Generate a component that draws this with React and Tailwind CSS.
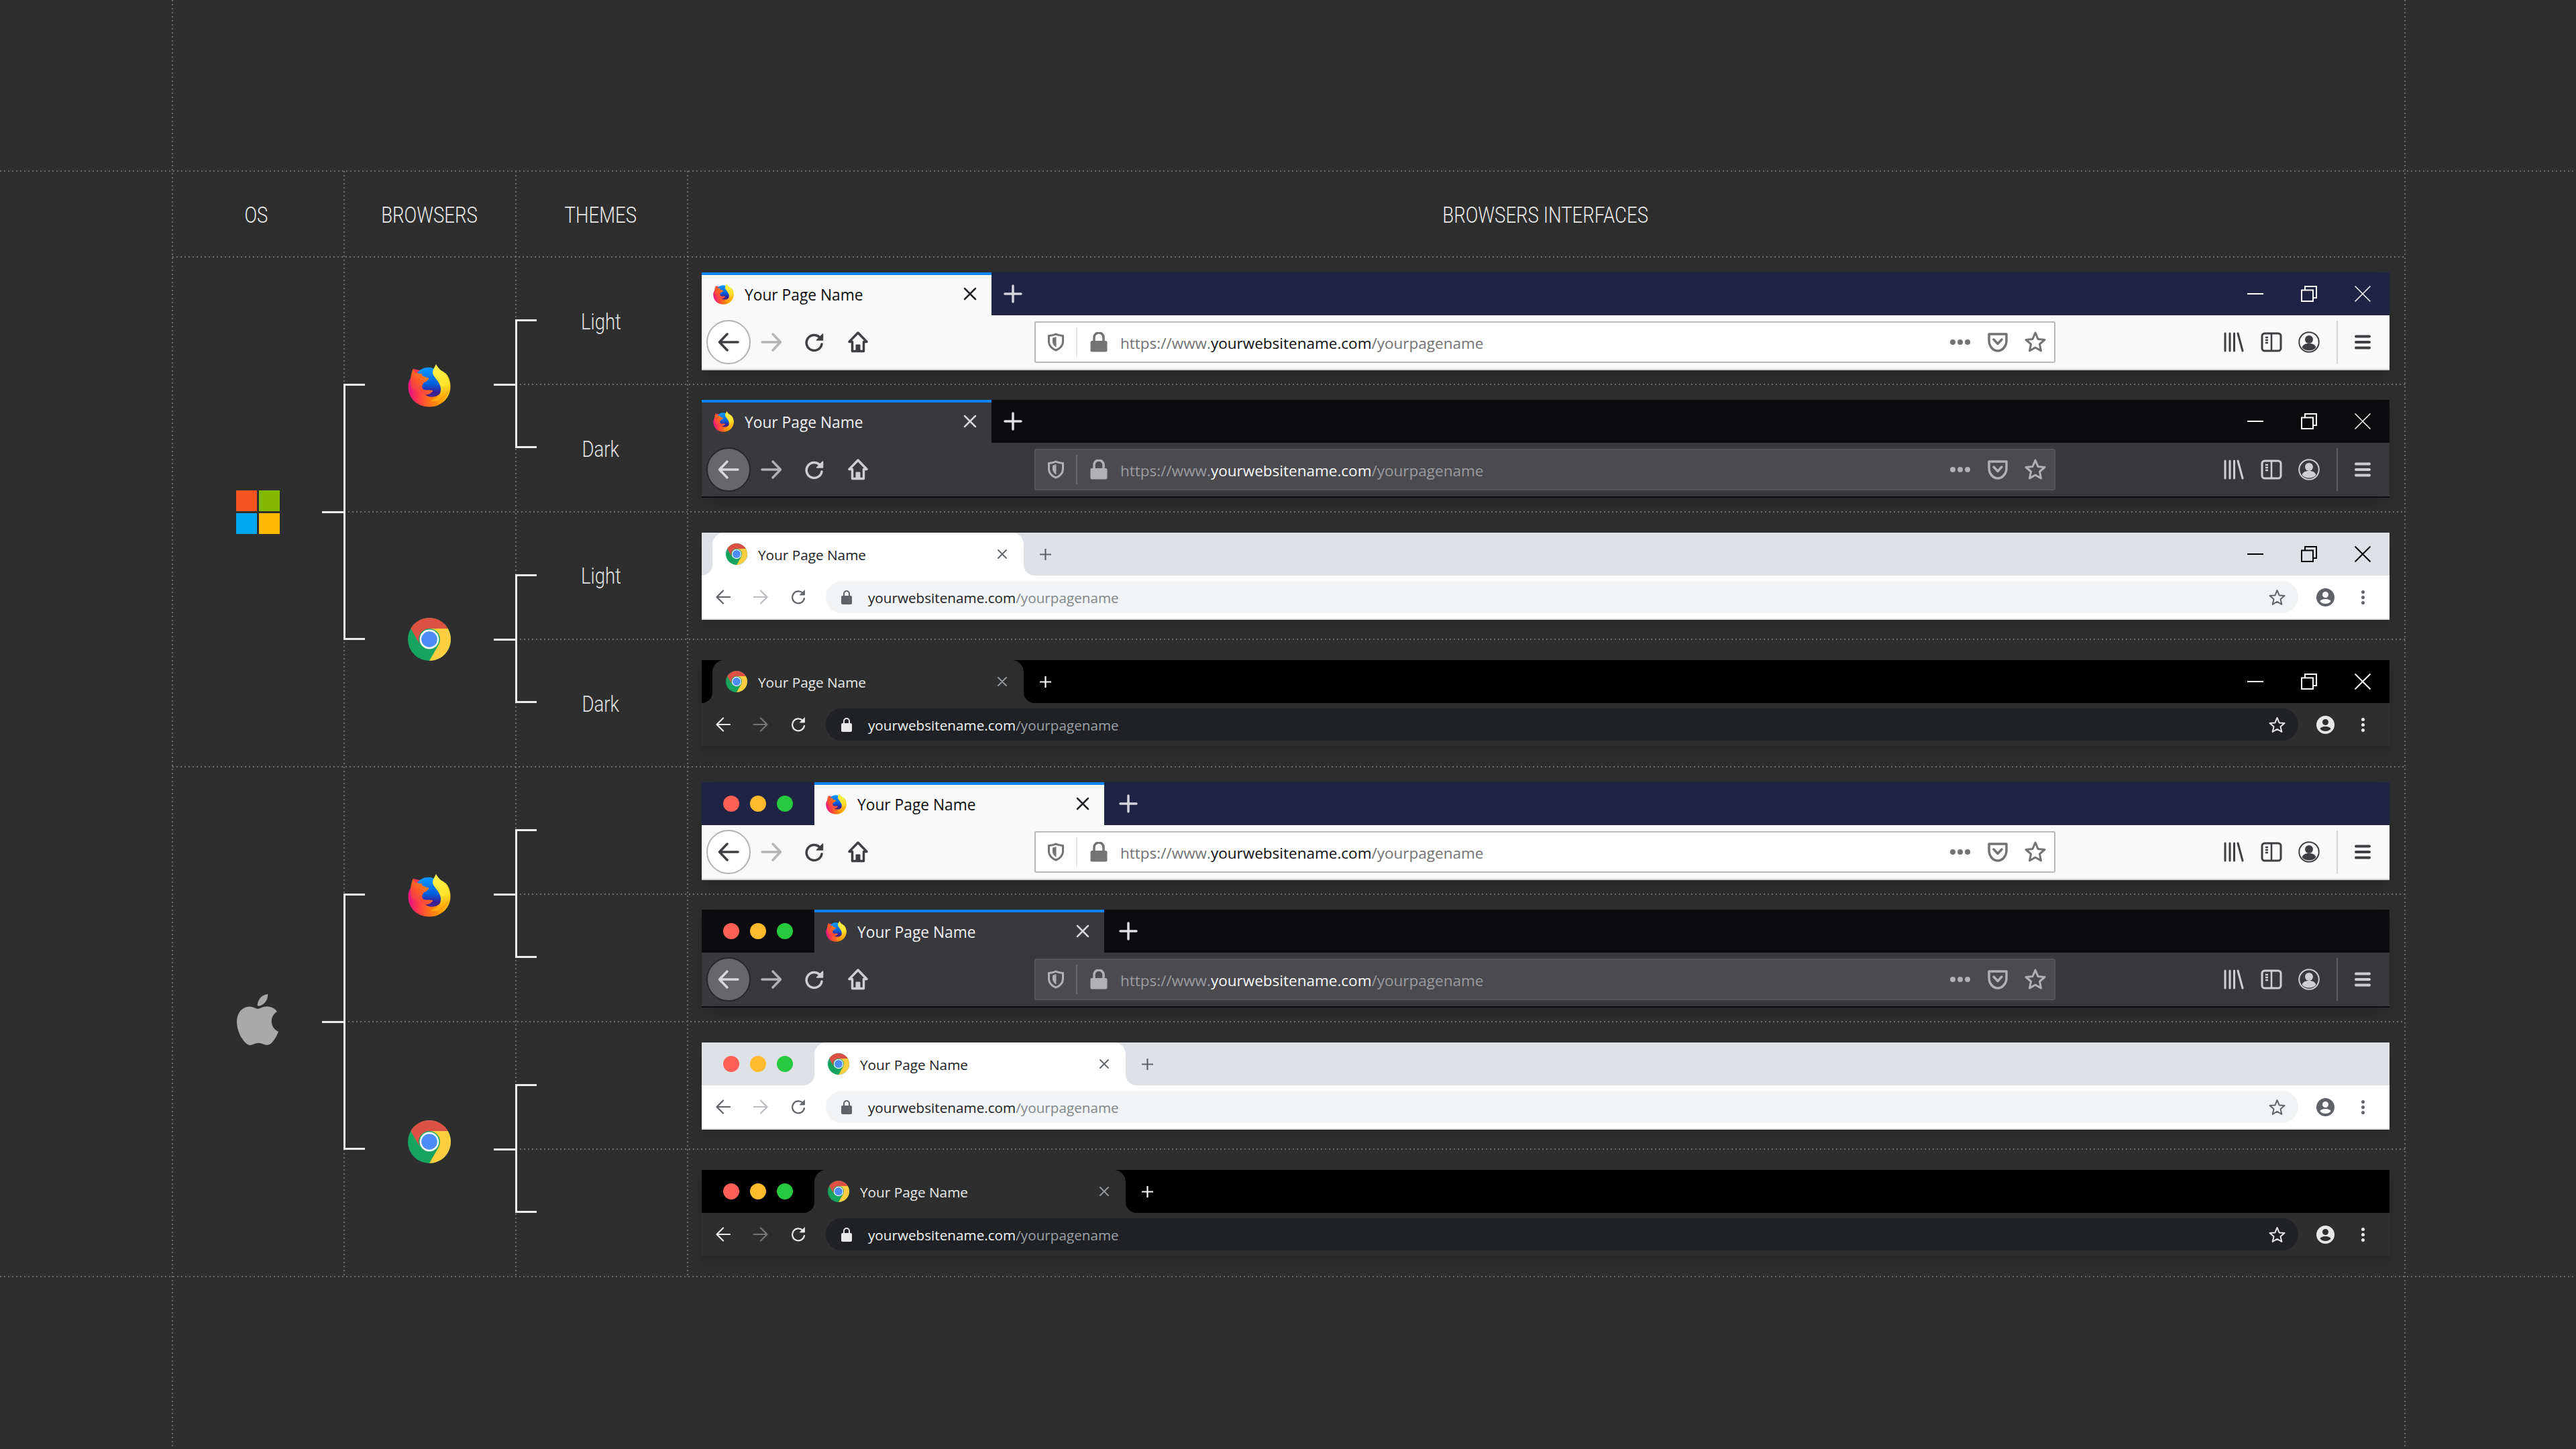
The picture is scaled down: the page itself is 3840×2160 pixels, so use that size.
import React from "react";
import { SiApple } from "react-icons/si";

const I = ({ w = 32, h = 32, vb = "0 0 32 32", className = "", children, sw = 3 }) => (
  <svg width={w} height={h} viewBox={vb} fill="none" stroke="currentColor" strokeWidth={sw} strokeLinecap="round" strokeLinejoin="round" className={"shrink-0 " + className}>
    {children}
  </svg>
);

const FirefoxLogo = ({ size = 64, idp = "a" }) => (
  <svg width={size} height={size} viewBox="0 0 64 64" className="shrink-0">
    <defs>
      <linearGradient id={idp + "body"} gradientUnits="userSpaceOnUse" x1="4" y1="46" x2="60" y2="44">
        <stop offset="0" stopColor="#e8197d" />
        <stop offset="0.2" stopColor="#ff3b47" />
        <stop offset="0.55" stopColor="#ff7a14" />
        <stop offset="0.85" stopColor="#ffa800" />
        <stop offset="1" stopColor="#ffc520" />
      </linearGradient>
      <linearGradient id={idp + "head"} gradientUnits="userSpaceOnUse" x1="4" y1="44" x2="36" y2="14">
        <stop offset="0" stopColor="#f2295f" />
        <stop offset="0.5" stopColor="#ff5a2a" />
        <stop offset="1" stopColor="#ff9a10" />
      </linearGradient>
      <linearGradient id={idp + "globe"} x1="0.5" y1="0" x2="0.5" y2="1">
        <stop offset="0" stopColor="#0a9bff" />
        <stop offset="0.55" stopColor="#0060df" />
        <stop offset="0.85" stopColor="#3a1d96" />
        <stop offset="1" stopColor="#45278d" />
      </linearGradient>
      <linearGradient id={idp + "tail"} x1="0.35" y1="0" x2="0.5" y2="1">
        <stop offset="0" stopColor="#fff44f" />
        <stop offset="0.6" stopColor="#ffe32a" />
        <stop offset="0.85" stopColor="#ffb00e" />
        <stop offset="1" stopColor="#ff980e" />
      </linearGradient>
    </defs>
    <path d="M7.7 6.8L10.5 13C4 19 .5 26 .5 33C.5 51 14 63.5 32 63.5C50 63.5 63.5 50 63.5 33C63.5 25 61 18 56 13L30 12Z" fill={`url(#${idp}body)`} />
    <path d="M13 14C18 7 26 4 34 5C46 7 55 20 54 33C52 44 42 50 33 48.5C25 47 19 40 18 32Z" fill={`url(#${idp}globe)`} />
    <path d="M7.7 6.8L11 12.5C15 13.5 18 14.5 21 14C20 16.5 24 19 31.5 20.5C31 23 28 26 24.5 27C21 30 20.5 34 22.5 37C27 40 32 37 37.5 39.5C33.500 44.5 29 46.5 24 45C18 44 10 40 6 36C2 25 5 13 7.7 6.8Z" fill={`url(#${idp}head)`} />
    <path d="M42 0C40 4 37 8 37 12C37 19 47 24 49 35C50 45 44 51 33 55C48 57 58 50 62 40C65 30 61 18 53 11C50 10 46 7 42 0Z" fill={`url(#${idp}tail)`} />
  </svg>
);

const ChromeLogo = ({ size = 64 }) => (
  <svg width={size} height={size} viewBox="0 0 100 100" className="shrink-0">
    <circle cx="50" cy="50" r="50" fill="#16a460" />
    <path d="M6.7 25A50 50 0 0 1 93.3 25H50A25 25 0 0 0 28.35 62.5Z" fill="#dd5044" />
    <path d="M93.3 25A50 50 0 0 1 50 100L71.65 62.500A25 25 0 0 0 50 25Z" fill="#ffcd40" />
    <circle cx="50" cy="50" r="22.500" fill="#fff" />
    <circle cx="50" cy="50" r="18.500" fill="#4d8bf5" />
  </svg>
);

const Lights = () => (
  <>
    <span className="w-6 h-6 rounded-full bg-[#ff5f57]" />
    <span className="w-6 h-6 rounded-full bg-[#ffbb2c]" />
    <span className="w-6 h-6 rounded-full bg-[#27c93f]" />
  </>
);

const WinButtons = ({ ff }) => (
  <div className="ml-auto flex items-center">
    <div className="w-20 flex justify-center">
      <I w={24} h={24} vb="0 0 24 24" sw={2}><path d="M0 12H24" strokeLinecap="butt" /></I>
    </div>
    <div className="w-20 flex justify-center">
      <I w={24} h={24} vb="0 0 24 24" sw={2}>
        <path d="M1 6.500H18V23H1Z" strokeLinecap="butt" strokeLinejoin="miter" />
        <path d="M6 6V1H23V18H18" strokeLinecap="butt" strokeLinejoin="miter" />
      </I>
    </div>
    <div className="w-20 flex justify-center">
      <I w={24} h={24} vb="0 0 24 24" sw={ff ? 1.5 : 2}><path d="M0.500 0.500L23.500 23.500M23.500 0.500L0.500 23.500" strokeLinecap="butt" /></I>
    </div>
  </div>
);

const uiFont = "font-['Open_Sans','Liberation_Sans',sans-serif] whitespace-nowrap leading-none";

const ff = {
  light: {
    strip: "bg-[#1f2344] text-white",
    tab: "bg-[#f9f9fa] text-[#0c0c0d]",
    tabX: "text-[#222226]",
    plus: "text-[#d4d5db]",
    bar: "bg-[#f9f9fa] border-[#d0d0d2] text-[#3f3f43]",
    back: "bg-white border-[#b1b1b3] text-[#3f3f43]",
    fwd: "text-[#b5b5b7]",
    url: "bg-white border-[#b8b8ba]",
    urlIcon: "text-[#737373]",
    sep: "border-[#e2e2e4]",
    sep2: "border-[#d5d5d7]",
    dim: "text-[#737373]",
    main: "text-[#0c0c0d]",
  },
  dark: {
    strip: "bg-[#0c0c0e] text-white",
    tab: "bg-[#38383d] text-[#f0f0f2]",
    tabX: "text-[#d7d7db]",
    plus: "text-[#e0e0e2]",
    bar: "bg-[#38383d] border-[#0c0c0d] text-[#cfcfd3]",
    back: "bg-[#67676a] border-[#27272a] text-[#d7d7db]",
    fwd: "text-[#b1b1b3]",
    url: "bg-[#4a4a4f] border-[#57575b]",
    urlIcon: "text-[#b1b1b3]",
    sep: "border-[#66666a]",
    sep2: "border-[#5f5f63]",
    dim: "text-[#9c9ca0]",
    main: "text-[#f9f9fa]",
  },
};

const FirefoxBar = ({ theme, mac }) => {
  const t = ff[theme];
  return (
    <div className="w-[2516px] flex flex-col shadow-[0_10px_20px_rgba(0,0,0,0.15)]">
      <div className={"h-16 flex items-stretch " + t.strip}>
        {mac && (
          <div className="w-[168px] flex items-center gap-4 pl-8"><Lights /></div>
        )}
        <div className={"w-[432px] flex items-center border-t-4 border-[#0a84ff] pb-1 " + t.tab}>
          <div className="w-[64px] flex justify-center"><FirefoxLogo size={31} idp={"t" + theme + (mac ? "m" : "w")} /></div>
          <span className={uiFont + " text-[22.75px] pt-[4px]"}>Your Page Name</span>
          <div className="ml-auto w-[64px] flex justify-center">
            <I w={20} h={20} vb="0 0 20 20" sw={2.5} className={t.tabX}><path d="M2 2L18 18M18 2L2 18" /></I>
          </div>
        </div>
        <div className={(mac ? "w-[72px]" : "w-[64px]") + " flex items-center justify-center"}>
          <I w={28} h={28} vb="0 0 28 28" sw={3.5} className={t.plus}><path d="M14 2V26M2 14H26" /></I>
        </div>
        {!mac && <WinButtons ff />}
      </div>
      <div className={"h-[82px] border-b-2 flex items-center " + t.bar}>
        <div className={"ml-[7px] w-[66px] h-[66px] rounded-full border-2 flex items-center justify-center " + t.back}>
          <I sw={3.5}><path d="M30 16H3M14 4L2.500 16L14 28" /></I>
        </div>
        <div className={"w-[62px] flex justify-center " + t.fwd}>
          <I sw={3.5}><path d="M2 16H29M18 4L29.500 16L18 28" /></I>
        </div>
        <div className="w-[66px] flex justify-center">
          <I sw={3.5}>
            <path d="M24 9A11.500 11.500 0 1 0 27 19" />
            <path d="M28.500 4V13H19.500Z" fill="currentColor" strokeWidth="1.500" />
          </I>
        </div>
        <div className="w-[64px] flex justify-center">
          <I sw={3.5}>
            <path d="M16 2L3 15.500H7.500V29.500H24.500V15.500H29Z" />
            <path d="M13 29V20H19V29Z" fill="currentColor" strokeWidth="1" />
          </I>
        </div>
        <div className={"ml-[231px] w-[1522px] h-[62px] border-2 rounded-[3px] flex items-center " + t.url}>
          <div className={"w-[62px] h-[44px] border-r-2 flex items-center justify-center " + t.sep + " " + t.urlIcon}>
            <I w={26} h={28} vb="0 0 26 28" sw={3}>
              <path d="M13 2C9 4 5 4 2.500 4.500V13C2.500 19 7 24 13 26C19 24 23.500 19 23.500 13V4.500C21 4 17 4 13 2Z" />
              <path d="M13 7V21C10 19 8.500 16 8.500 13V8.500Z" fill="currentColor" strokeWidth="1" />
            </I>
          </div>
          <div className={"w-[64px] flex justify-center " + t.urlIcon}>
            <svg width="26" height="30" viewBox="0 0 26 30" fill="currentColor"><path d="M3 13H23a2.500 2.500 0 0 1 2.500 2.500V27A2.500 2.500 0 0 1 23 29.500H3A2.500 2.500 0 0 1 .5 27V15.500A2.500 2.500 0 0 1 3 13Z" /><path d="M6 14V8a7 7 0 0 1 14 0V14" fill="none" stroke="currentColor" strokeWidth="3.500" /></svg>
          </div>
          <span className={uiFont + " text-[22.5px] pt-[4px]"}>
            <span className={t.dim}>https://www.</span>
            <span className={t.main}>yourwebsitename.com</span>
            <span className={t.dim}>/yourpagename</span>
          </span>
          <div className={"ml-auto flex items-center " + t.urlIcon}>
            <div className="w-14 flex justify-center gap-[3px]">
              <span className="w-2 h-2 rounded-full bg-current" />
              <span className="w-2 h-2 rounded-full bg-current" />
              <span className="w-2 h-2 rounded-full bg-current" />
            </div>
            <div className="w-14 flex justify-center">
              <I sw={3.5}>
                <path d="M3 4H29V14C29 22 23 29 16 29C9 29 3 22 3 14Z" />
                <path d="M10 12L16 18.500L22 12" />
              </I>
            </div>
            <div className="w-14 flex justify-center">
              <I sw={3}><path d="M16 2L20 11.500L30 12.500L22.500 19L24.500 29L16 24L7.500 29L9.500 19L2 12.500L12 11.500Z" /></I>
            </div>
          </div>
        </div>
        <div className="ml-auto flex items-center">
          <div className="w-14 flex justify-center">
            <I sw={3}><path d="M3 3V29M10 3V29M16.500 3V29M22 3L29 29" /></I>
          </div>
          <div className="w-14 flex justify-center">
            <I sw={3}>
              <rect x="2" y="3" width="28" height="26" rx="4" />
              <path d="M16 3V29M7 9H11M7 13H11M7 17H11" strokeWidth="2.500" strokeLinecap="butt" />
            </I>
          </div>
          <div className="w-14 flex justify-center">
            <svg width="32" height="32" viewBox="0 0 32 32">
              <circle cx="16" cy="16" r="14.750" fill="none" stroke="currentColor" strokeWidth="2" />
              <circle cx="16" cy="12" r="6" fill="currentColor" />
              <path d="M5.500 24C7 19.500 11 18 16 18C21 18 25 19.500 26.500 24C24 27 20 28.500 16 28.500C12 28.500 8 27 5.500 24Z" fill="currentColor" />
            </svg>
          </div>
          <div className={"ml-[13px] w-[79px] h-16 border-l-2 flex items-center justify-center pr-[4px] " + t.sep2}>
            <I w={24} h={24} vb="0 0 24 24" sw={4}><path d="M2 3.500H22M2 12H22M2 20.500H22" /></I>
          </div>
        </div>
      </div>
    </div>
  );
};

const ch = {
  light: {
    wrap: "bg-white",
    strip: "bg-[#dee1e6] text-black",
    tab: "bg-white text-[#202124]",
    close: "text-[#5f6368]",
    plus: "text-[#5f6368]",
    bar: "border-[#dcdee2] text-[#5f6368]",
    fwd: "text-[#b9bbbe]",
    pill: "bg-[#f1f3f4]",
    main: "text-[#202124]",
    dim: "text-[#80868b]",
  },
  dark: {
    wrap: "bg-[#2e2e2e]",
    strip: "bg-black text-white",
    tab: "bg-[#2e2e2e] text-[#e8eaed]",
    close: "text-[#9aa0a6]",
    plus: "text-white",
    bar: "border-[#262626] text-[#e8e8e8]",
    fwd: "text-[#757575]",
    pill: "bg-[#202124]",
    main: "text-[#f1f3f4]",
    dim: "text-[#9aa0a6]",
  },
};

const ChromeBar = ({ theme, mac }) => {
  const t = ch[theme];
  return (
    <div className={"w-[2516px] flex flex-col shadow-[0_10px_20px_rgba(0,0,0,0.15)] " + t.wrap}>
      <div className="h-16 flex items-stretch">
        {mac ? (
          <div className={"w-[168px] rounded-br-[16px] flex items-center gap-4 pl-8 " + t.strip}><Lights /></div>
        ) : (
          <div className={"w-4 rounded-br-[16px] " + t.strip} />
        )}
        <div className={t.strip + " w-[464px]"}>
          <div className={"h-full rounded-t-[18px] flex items-center " + t.tab}>
            <div className="w-[72px] flex justify-center"><ChromeLogo size={32} /></div>
            <span className={uiFont + " text-[20.75px] -ml-[4px] pt-[2px]"}>Your Page Name</span>
            <div className="ml-auto w-[64px] flex justify-center">
              <I w={14} h={14} vb="0 0 14 14" sw={1.800} className={t.close}><path d="M1 1L13 13M13 1L1 13" /></I>
            </div>
          </div>
        </div>
        <div className={"flex-1 rounded-bl-[16px] flex items-stretch " + t.strip}>
          <div className="w-[64px] flex items-center justify-center">
            <I w={19} h={19} vb="0 0 19 19" sw={2.200} className={t.plus}><path d="M9.500 1V18M1 9.500H18" strokeLinecap="butt" /></I>
          </div>
          {!mac && <WinButtons />}
        </div>
      </div>
      <div className={"h-[66px] border-b-2 flex items-center pl-1 " + t.bar}>
        <div className="w-14 flex justify-center">
          <I w={22} h={22} vb="0 0 22 22" sw={2.200}><path d="M21 11H2M11 1.500L1.500 11L11 20.500" /></I>
        </div>
        <div className={"w-14 flex justify-center " + t.fwd}>
          <I w={22} h={22} vb="0 0 22 22" sw={2.200}><path d="M1 11H20M11 1.500L20.500 11L11 20.500" /></I>
        </div>
        <div className="w-14 flex justify-center">
          <I w={22} h={22} vb="0 0 22 22" sw={2.200}>
            <path d="M17.500 5A9 9 0 1 0 20 13" />
            <path d="M20.500 1V8H13.500Z" fill="currentColor" strokeWidth="0.800" />
          </I>
        </div>
        <div className={"ml-[13px] w-[2195px] h-12 rounded-full flex items-center pl-[23px] " + t.pill}>
          <svg width="16" height="21" viewBox="0 0 16 21" fill="currentColor" className="shrink-0"><path d="M2 8H14a2 2 0 0 1 2 2V19a2 2 0 0 1-2 2H2a2 2 0 0 1-2-2V10a2 2 0 0 1 2-2Z" /><path d="M4 9V5a4 4 0 0 1 8 0V9" fill="none" stroke="currentColor" strokeWidth="2" /></svg>
          <span className={uiFont + " ml-[24px] text-[20.7px] pt-[3px]"}>
            <span className={t.main}>yourwebsitename.com</span>
            <span className={t.dim}>/yourpagename</span>
          </span>
          <div className="ml-auto pr-[19px]">
            <I w={25} h={25} vb="0 0 25 25" sw={2}><path d="M12.500 2L15.600 9.400L23.500 10L17.500 15.300L19.300 23L12.500 18.900L5.700 23L7.500 15.300L1.500 10L9.400 9.400Z" /></I>
          </div>
        </div>
        <div className="w-20 flex justify-center">
          <svg width="27" height="27" viewBox="0 0 27 27" fill="currentColor">
            <path fillRule="evenodd" d="M13.500 0a13.500 13.500 0 1 0 0 27a13.500 13.500 0 0 0 0-27ZM13.500 5a4.500 4.500 0 1 1 0 9a4.500 4.500 0 0 1 0-9ZM13.500 16C17.500 16 21 17.300 21.500 19.500C19.500 22 16.500 23 13.500 23C10.500 23 7.500 22 5.500 19.500C6 17.300 9.500 16 13.500 16Z" />
          </svg>
        </div>
        <div className="w-8 flex flex-col items-center gap-[3px]">
          <span className="w-[5px] h-[5px] rounded-full bg-current" />
          <span className="w-[5px] h-[5px] rounded-full bg-current" />
          <span className="w-[5px] h-[5px] rounded-full bg-current" />
        </div>
      </div>
    </div>
  );
};

const hLine = "self-start h-[2px] -mt-px bg-[repeating-linear-gradient(90deg,#6e6e6e_0_2px,transparent_2px_6px)]";
const vLine = "justify-self-start w-[2px] -ml-px bg-[repeating-linear-gradient(180deg,#6e6e6e_0_2px,transparent_2px_6px)]";
const head = "flex items-center justify-center pt-1 pr-[3px] font-['Roboto',sans-serif] font-light text-[33px] text-[#eaeaea] whitespace-nowrap";
const headInner = "inline-block scale-x-[0.835]";
const label = "col-start-4 flex items-center justify-center pr-[3px] font-['Roboto',sans-serif] font-light text-[33px] text-[#e4e4e4]";
const row = "col-start-5 flex items-start pl-[21px]";
const ink = "bg-[#ececec]";
const thBracket = "col-start-4 self-start justify-self-start -ml-px mt-[93px] w-[32px] h-[192px] border-l-[3px] border-y-[3px] border-[#ececec]";
const osBracket = "col-start-3 self-start justify-self-start -ml-px mt-[189px] w-[32px] h-[382px] border-l-[3px] border-y-[3px] border-[#ececec]";
const stub = "self-center justify-self-end w-[33px] h-[3px] " + ink;
const center = "col-start-3 flex items-center justify-center pr-[2px]";

export default function App() {
  return (
    <div className="w-[3840px] h-[2160px] overflow-hidden bg-[#2e2e2e] grid grid-cols-[257px_256px_256px_256px_2560px_255px] grid-rows-[255px_128px_repeat(8,190px)_257px]">
      {/* dotted guides */}
      <div className={hLine + " col-start-1 col-end-7 row-start-2"} />
      <div className={hLine + " col-start-2 col-end-6 row-start-3"} />
      <div className={hLine + " col-start-4 col-end-6 row-start-4"} />
      <div className={hLine + " col-start-3 col-end-6 row-start-5"} />
      <div className={hLine + " col-start-4 col-end-6 row-start-6"} />
      <div className={hLine + " col-start-2 col-end-6 row-start-7"} />
      <div className={hLine + " col-start-4 col-end-6 row-start-8"} />
      <div className={hLine + " col-start-3 col-end-6 row-start-9"} />
      <div className={hLine + " col-start-4 col-end-6 row-start-10"} />
      <div className={hLine + " col-start-1 col-end-7 row-start-11"} />
      <div className={vLine + " col-start-2 row-start-1 row-end-12"} />
      <div className={vLine + " col-start-3 row-start-2 row-end-11"} />
      <div className={vLine + " col-start-4 row-start-2 row-end-11"} />
      <div className={vLine + " col-start-5 row-start-2 row-end-11"} />
      <div className={vLine + " col-start-6 row-start-1 row-end-12"} />

      {/* header */}
      <div className={head + " col-start-2 row-start-2"}><span className={headInner + " mr-[3px]"}>OS</span></div>
      <div className={head + " col-start-3 row-start-2"}><span className={headInner}>BROWSERS</span></div>
      <div className={head + " col-start-4 row-start-2"}><span className={headInner}>THEMES</span></div>
      <div className={head + " col-start-5 row-start-2"}><span className={headInner}>BROWSERS INTERFACES</span></div>

      {/* OS */}
      <div className="col-start-2 row-start-3 row-end-7 flex items-center justify-center pr-[2px]">
        <div className="grid grid-cols-[31px_31px] grid-rows-[31px_31px] gap-[3px]">
          <span className="bg-[#f65420]" />
          <span className="bg-[#83ba00]" />
          <span className="bg-[#00a8f3]" />
          <span className="bg-[#ffb900]" />
        </div>
      </div>
      <div className="col-start-2 row-start-7 row-end-11 flex items-center justify-center pr-[2px] pb-[6px]">
        <SiApple className="text-[#a9a9a9] w-[76px] h-[76px]" />
      </div>
      <div className={stub + " col-start-2 row-start-3 row-end-7"} />
      <div className={stub + " col-start-2 row-start-7 row-end-11"} />
      <div className={osBracket + " row-start-3 row-end-7"} />
      <div className={osBracket + " row-start-7 row-end-11"} />

      {/* browsers */}
      <div className={center + " row-start-3 row-end-5 pt-[3px]"}><FirefoxLogo idp="big1" /></div>
      <div className={center + " row-start-5 row-end-7"}><ChromeLogo /></div>
      <div className={center + " row-start-7 row-end-9 pt-[3px]"}><FirefoxLogo idp="big2" /></div>
      <div className={center + " row-start-9 row-end-11 pb-[22px]"}><ChromeLogo /></div>
      <div className={stub + " col-start-3 row-start-3 row-end-5"} />
      <div className={stub + " col-start-3 row-start-5 row-end-7"} />
      <div className={stub + " col-start-3 row-start-7 row-end-9"} />
      <div className={stub + " col-start-3 row-start-9 row-end-11"} />
      <div className={thBracket + " row-start-3 row-end-5"} />
      <div className={thBracket + " row-start-5 row-end-7"} />
      <div className={thBracket + " row-start-7 row-end-9"} />
      <div className={thBracket + " row-start-9 row-end-11"} />

      {/* themes */}
      <div className={label + " row-start-3 pt-[4px]"}><span className={headInner}>Light</span></div>
      <div className={label + " row-start-4 pt-[4px]"}><span className={headInner}>Dark</span></div>
      <div className={label + " row-start-5 pt-[1px]"}><span className={headInner}>Light</span></div>
      <div className={label + " row-start-6 pt-[4px]"}><span className={headInner}>Dark</span></div>

      {/* interfaces */}
      <div className={row + " row-start-3 pt-[23px]"}><FirefoxBar theme="light" /></div>
      <div className={row + " row-start-4 pt-[23px]"}><FirefoxBar theme="dark" /></div>
      <div className={row + " row-start-5 pt-[31px]"}><ChromeBar theme="light" /></div>
      <div className={row + " row-start-6 pt-[31px]"}><ChromeBar theme="dark" /></div>
      <div className={row + " row-start-7 pt-[23px]"}><FirefoxBar theme="light" mac /></div>
      <div className={row + " row-start-8 pt-[23px]"}><FirefoxBar theme="dark" mac /></div>
      <div className={row + " row-start-9 pt-[31px]"}><ChromeBar theme="light" mac /></div>
      <div className={row + " row-start-10 pt-[31px]"}><ChromeBar theme="dark" mac /></div>
    </div>
  );
}
